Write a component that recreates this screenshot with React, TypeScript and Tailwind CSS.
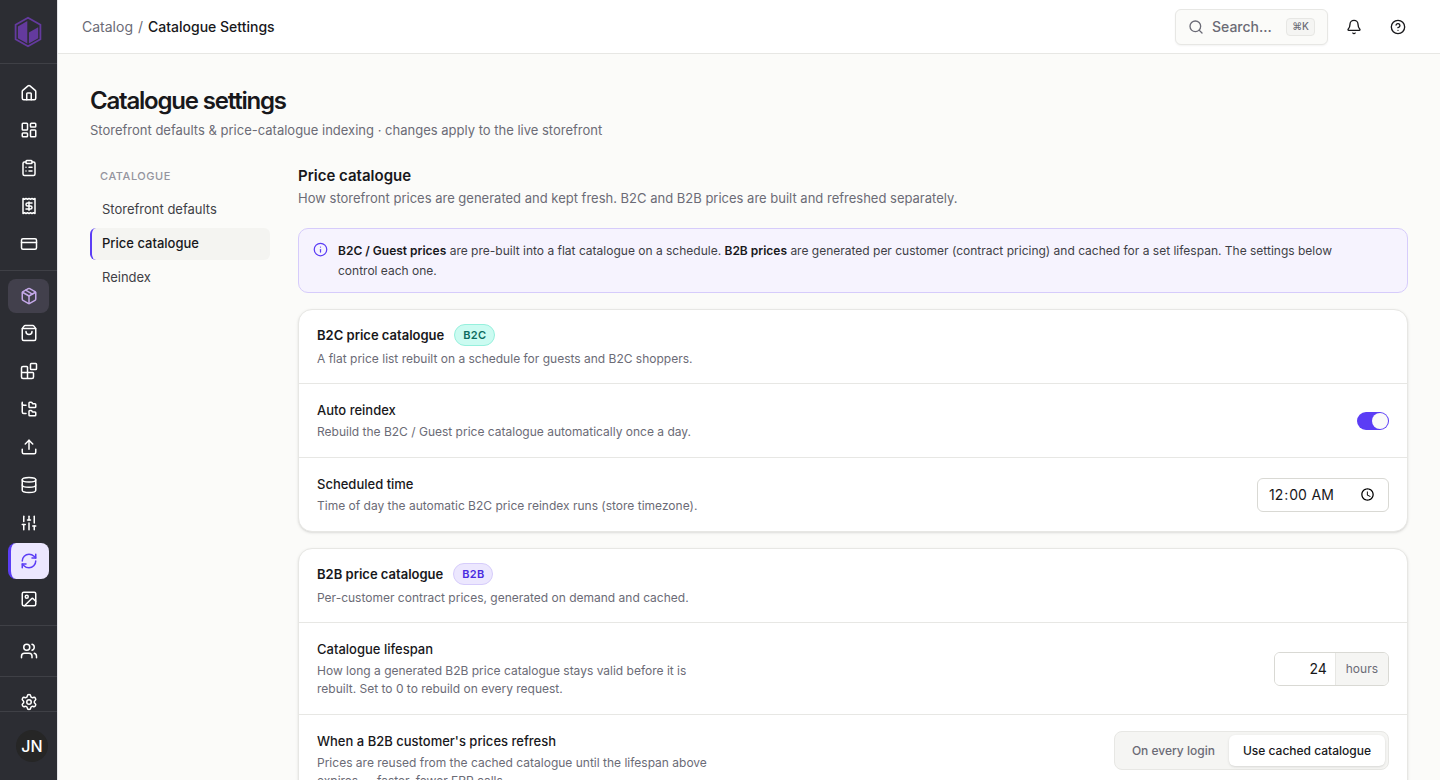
import { useState } from 'react'
import type { ReactNode } from 'react'
import {
  Bell,
  Blocks,
  CircleHelp,
  ClipboardList,
  CreditCard,
  Database,
  FolderTree,
  House,
  Image,
  Info,
  LayoutDashboard,
  Package,
  Receipt,
  RefreshCw,
  Search,
  Settings,
  ShoppingBag,
  SlidersVertical,
  Upload,
  Users,
} from 'lucide-react'
import type { LucideIcon } from 'lucide-react'
import clsx from 'clsx'

type NavItem = {
  label: string
  icon: LucideIcon
  // group = top level entry with children
  kind?: 'group'
  state?: 'open' | 'current'
}

const navSections: NavItem[][] = [
  [
    { label: 'Home', icon: House, kind: 'group' },
    { label: 'Dashboard', icon: LayoutDashboard },
    { label: 'Orders', icon: ClipboardList },
    { label: 'Invoices', icon: Receipt },
    { label: 'Payments', icon: CreditCard },
  ],
  [
    { label: 'Catalog', icon: Package, kind: 'group', state: 'open' },
    { label: 'Products', icon: ShoppingBag },
    { label: 'Attributes', icon: Blocks },
    { label: 'Categories', icon: FolderTree },
    { label: 'Import', icon: Upload },
    { label: 'Data', icon: Database },
    { label: 'Filters', icon: SlidersVertical },
    { label: 'Catalogue Settings', icon: RefreshCw, state: 'current' },
    { label: 'Media', icon: Image },
  ],
  [{ label: 'Customers', icon: Users, kind: 'group' }],
  [{ label: 'Settings', icon: Settings, kind: 'group' }],
]

const settingsTabs = ['Storefront defaults', 'Price catalogue', 'Reindex']

function Logo() {
  return (
    <svg width="28" height="32" viewBox="0 0 28 32" fill="none" aria-hidden="true">
      <path d="M14 1.8 26.4 8.8V23.2L14 30.2 1.6 23.2V8.8Z" stroke="#643a9e" strokeWidth="1.8" />
      <path d="M3.9 10.4 13.3 5V27.5L3.9 22.2Z" fill="#643a9e" />
      <path d="M14.9 16.5 24.2 11.2V22.2L14.9 27.5Z" fill="#643a9e" />
    </svg>
  )
}

function Sidebar() {
  return (
    <aside className="flex h-screen w-[58px] shrink-0 flex-col border-r border-[#e4e4e7] bg-[#2c2d33]">
      <div className="flex h-16 shrink-0 items-center border-b border-[#3f4046] pl-3.5">
        <Logo />
      </div>
      <nav aria-label="Main" className="min-h-0 flex-1 overflow-hidden pt-1">
        {navSections.map((section, i) => (
          <ul
            key={i}
            className="flex flex-col gap-0.5 border-b border-[#3f4046] px-2 py-2 last:border-b-0"
          >
            {section.map(({ label, icon: Icon, kind, state }) => (
              <li key={label}>
                <a
                  href="#"
                  aria-label={label}
                  aria-current={state === 'current' ? 'page' : undefined}
                  className={clsx(
                    'flex items-center justify-center rounded-lg',
                    kind === 'group' ? 'h-[34px]' : 'h-9',
                    state === 'open' && 'bg-[#42404c] text-[#c4a8e8]',
                    state === 'current' && 'border-l-3 border-[#5b3df5] bg-[#ece7fe] pr-[3px] text-[#5b3df5]',
                    !state && 'text-white'
                  )}
                >
                  <Icon size={18} strokeWidth={2} />
                </a>
              </li>
            ))}
          </ul>
        ))}
      </nav>
      <div className="flex h-[69px] shrink-0 items-center border-t border-[#3f4046] pl-4">
        <button
          type="button"
          aria-label="Account"
          className="flex size-8 items-center justify-center rounded-full bg-[#262626] text-base font-medium text-white"
        >
          JN
        </button>
      </div>
    </aside>
  )
}

function TopBar() {
  return (
    <header className="flex h-[54px] shrink-0 items-center justify-between border-b border-[#e7e7e4] bg-white px-6">
      <nav aria-label="Breadcrumb" className="flex items-center gap-[5px] text-sm">
        <a href="#" className="text-[#6b6b76]">
          Catalog
        </a>
        <span className="text-[#6b6b76]">/</span>
        <span className="font-medium text-[#18181b]">Catalogue Settings</span>
      </nav>
      <div className="flex items-center gap-2">
        <button
          type="button"
          className="flex h-9 w-[153px] items-center rounded-md border border-[#e7e7e4] bg-[#fbfbf9] px-3 text-sm font-medium text-[#6b6b76] shadow-xs"
        >
          <Search size={16} />
          <span className="ml-2">Search...</span>
          <kbd className="ml-auto flex h-[18px] items-center rounded border border-[#e7e7e4] bg-[#f5f5f3] px-[5px] font-[Inter] text-[10px] font-medium">
            ⌘K
          </kbd>
        </button>
        <button type="button" aria-label="Notifications" className="flex size-9 items-center justify-center">
          <Bell size={16} />
        </button>
        <button type="button" aria-label="Help" className="flex size-9 items-center justify-center">
          <CircleHelp size={16} />
        </button>
      </div>
    </header>
  )
}

function SettingsNav() {
  return (
    <nav aria-label="Catalogue" className="w-[180px] shrink-0 pt-0.5">
      <h2 className="px-2.5 text-[11px] leading-5 font-medium tracking-wider text-[#94949e] uppercase">
        Catalogue
      </h2>
      <ul className="mt-2 flex flex-col gap-0.5">
        {settingsTabs.map((tab) => {
          const active = tab === 'Price catalogue'
          return (
            <li key={tab}>
              <a
                href="#"
                aria-current={active ? 'true' : undefined}
                className={clsx(
                  'flex h-8 items-center rounded-md border-l-2 px-2.5 text-[13px]',
                  active
                    ? 'border-[#5b3df5] bg-[#f4f4f1] font-medium text-[#18181b]'
                    : 'border-transparent text-[#3f3f46]'
                )}
              >
                {tab}
              </a>
            </li>
          )
        })}
      </ul>
    </nav>
  )
}

function Card({
  title,
  badge,
  badgeClass,
  description,
  children,
}: {
  title: string
  badge: string
  badgeClass: string
  description: string
  children: ReactNode
}) {
  return (
    <section className="mt-4 divide-y divide-[#e7e7e4] rounded-[14px] border border-[#e7e7e4] bg-white shadow-sm">
      <div className="px-[18px] py-3.5">
        <div className="flex items-center gap-2.5">
          <h3 className="text-[13px] leading-[22px] font-semibold">{title}</h3>
          <span
            className={clsx(
              'flex h-[22px] items-center rounded-full border px-2 text-[11px] font-semibold tracking-wide',
              badgeClass
            )}
          >
            {badge}
          </span>
        </div>
        <p className="mt-[3px] text-xs leading-5 text-[#6b6b76]">{description}</p>
      </div>
      {children}
    </section>
  )
}

function SettingRow({
  title,
  htmlFor,
  description,
  alignTop,
  children,
}: {
  title: string
  htmlFor?: string
  description: string
  alignTop?: boolean
  children: ReactNode
}) {
  return (
    <div
      className={clsx('flex justify-between gap-6 px-[18px] py-4', alignTop ? 'items-start' : 'items-center')}
    >
      <div className="max-w-[400px]">
        <label htmlFor={htmlFor} className="block text-[13px] leading-5 font-medium">
          {title}
        </label>
        <p className="mt-[3px] text-xs leading-[18px] text-[#6b6b76]">{description}</p>
      </div>
      {children}
    </div>
  )
}

export default function App() {
  const [autoReindex, setAutoReindex] = useState(true)
  const [time, setTime] = useState('00:00')
  const [lifespan, setLifespan] = useState('24')
  const [refreshMode, setRefreshMode] = useState('cached')

  const modes = [
    { id: 'login', label: 'On every login' },
    { id: 'cached', label: 'Use cached catalogue' },
  ]

  return (
    <div className="flex h-screen overflow-hidden bg-[#fbfbf9] font-[Inter,sans-serif] text-[#18181b] antialiased">
      <Sidebar />
      <div className="flex min-w-0 flex-1 flex-col">
        <TopBar />
        <main className="min-h-0 flex-1 overflow-hidden px-8 pt-8">
          <h1 className="text-2xl leading-[30px] font-semibold tracking-tighter">Catalogue settings</h1>
          <p className="mt-1 text-[13px] leading-5 text-[#6b6b76]">
            Storefront defaults &amp; price-catalogue indexing · changes apply to the live storefront
          </p>

          <div className="mt-6 flex gap-7">
            <SettingsNav />
            <div className="min-w-0 flex-1 pb-8">
              <h2 className="text-[15px] leading-6 font-semibold">Price catalogue</h2>
              <p className="text-[13px] leading-5 text-[#6b6b76]">
                How storefront prices are generated and kept fresh. B2C and B2B prices are built and refreshed
                separately.
              </p>

              {/* Info banner */}
              <div className="mt-5 flex gap-2.5 rounded-[10px] border border-[#d6ccfb] bg-[#f6f3fe] pt-3 pr-10 pb-[11px] pl-3.5">
                <Info size={15} className="mt-px shrink-0 text-[#5b3df5]" />
                <p className="text-xs leading-5 text-[#3f3f46]">
                  <strong className="font-semibold text-[#18181b]">B2C / Guest prices</strong> are pre-built into
                  a flat catalogue on a schedule.{' '}
                  <strong className="font-semibold text-[#18181b]">B2B prices</strong> are generated per customer
                  (contract pricing) and cached for a set lifespan. The settings below control each one.
                </p>
              </div>

              <Card
                title="B2C price catalogue"
                badge="B2C"
                badgeClass="border-[#96f0dd] bg-[#cbfbf1] text-[#0b6b60]"
                description="A flat price list rebuilt on a schedule for guests and B2C shoppers."
              >
                <SettingRow
                  title="Auto reindex"
                  htmlFor="auto-reindex"
                  description="Rebuild the B2C / Guest price catalogue automatically once a day."
                >
                  <input
                    id="auto-reindex"
                    type="checkbox"
                    role="switch"
                    checked={autoReindex}
                    onChange={(e) => setAutoReindex(e.target.checked)}
                    className="flex h-[18px] w-8 appearance-none items-center rounded-full bg-[#d4d4d0] px-px before:size-4 before:rounded-full before:bg-[#fbfbf9] checked:justify-end checked:bg-[#5b3df5]"
                  />
                </SettingRow>
                <SettingRow
                  title="Scheduled time"
                  htmlFor="scheduled-time"
                  description="Time of day the automatic B2C price reindex runs (store timezone)."
                >
                  <input
                    id="scheduled-time"
                    type="time"
                    value={time}
                    onChange={(e) => setTime(e.target.value)}
                    className="h-[34px] w-[132px] rounded-md border border-[#d9d9d4] bg-white px-2.5 text-sm"
                  />
                </SettingRow>
              </Card>

              <Card
                title="B2B price catalogue"
                badge="B2B"
                badgeClass="border-[#d6ccfb] bg-[#ece7fe] text-[#4a2be0]"
                description="Per-customer contract prices, generated on demand and cached."
              >
                <SettingRow
                  title="Catalogue lifespan"
                  htmlFor="lifespan"
                  description="How long a generated B2B price catalogue stays valid before it is rebuilt. Set to 0 to rebuild on every request."
                >
                  <div className="flex h-[34px] overflow-hidden rounded-md border border-[#d9d9d4]">
                    <input
                      id="lifespan"
                      type="text"
                      inputMode="numeric"
                      value={lifespan}
                      onChange={(e) => setLifespan(e.target.value)}
                      className="w-[60px] bg-white px-2 text-right text-sm"
                    />
                    <span className="flex items-center border-l border-[#e7e7e4] bg-[#f5f5f3] px-2.5 text-xs text-[#6b6b76]">
                      hours
                    </span>
                  </div>
                </SettingRow>
                <SettingRow
                  title="When a B2B customer's prices refresh"
                  description="Prices are reused from the cached catalogue until the lifespan above expires — faster, fewer ERP calls."
                  alignTop
                >
                  <div className="flex rounded-lg border border-[#e7e7e4] bg-[#f5f5f3] p-[3px]">
                    {modes.map((mode) => (
                      <button
                        key={mode.id}
                        type="button"
                        aria-pressed={refreshMode === mode.id}
                        onClick={() => setRefreshMode(mode.id)}
                        className={clsx(
                          'h-[31px] rounded-md px-3.5 text-xs font-medium',
                          refreshMode === mode.id ? 'bg-white shadow-sm' : 'text-[#6b6b76]'
                        )}
                      >
                        {mode.label}
                      </button>
                    ))}
                  </div>
                </SettingRow>
              </Card>
            </div>
          </div>
        </main>
      </div>
    </div>
  )
}
